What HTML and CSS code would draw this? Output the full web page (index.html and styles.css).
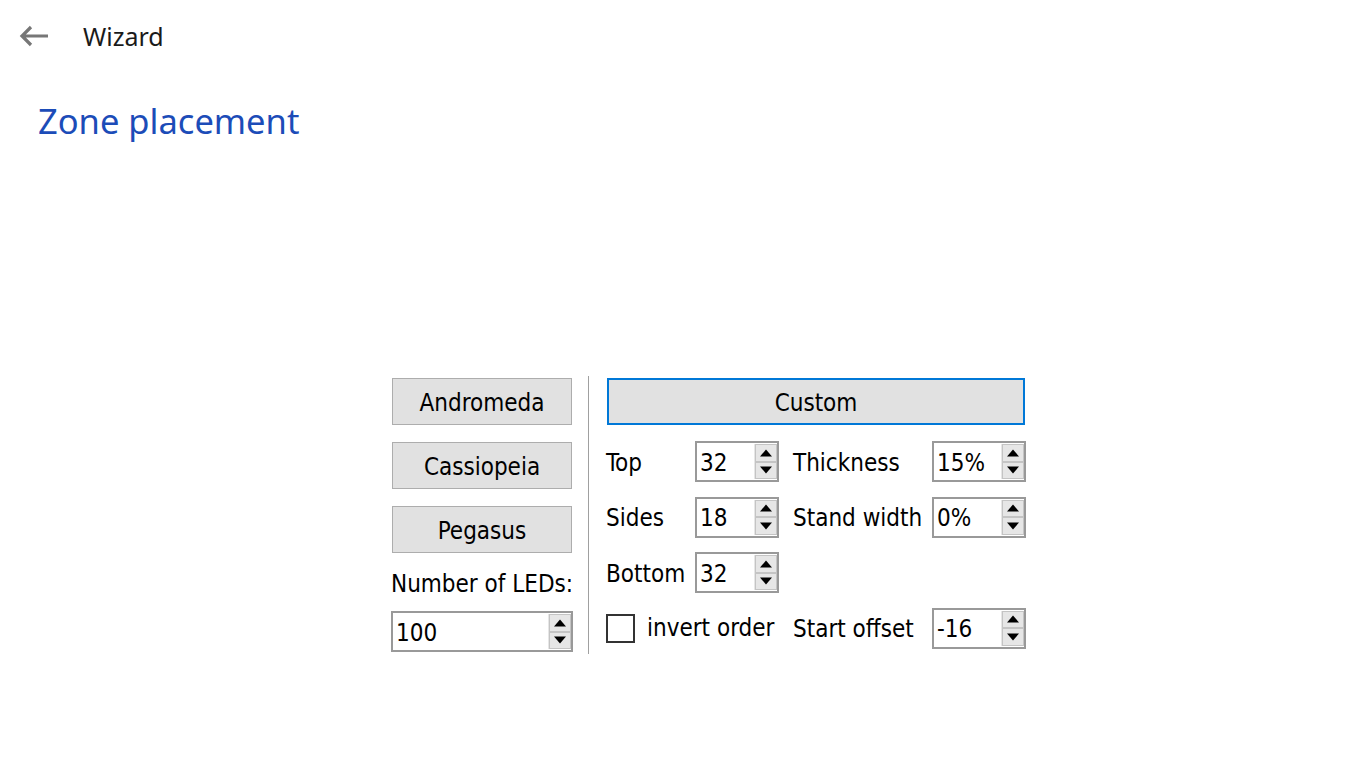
FILE: index.html
```html
<!DOCTYPE html>
<html>
<head>
<meta charset="utf-8">
<link rel="stylesheet" href="styles.css">
</head>
<body>
<header class="topbar">
  <span class="back">
    <svg width="30" height="22" viewBox="0 0 30 22"><path d="M29 11H4M12 2L3 11l9 9" fill="none" stroke="#777" stroke-width="3.2"/></svg>
  </span>
  <span class="app-title">Wizard</span>
</header>
<h1 class="page-title">Zone placement</h1>

<section class="panel">
  <div class="left-col">
    <button class="btn preset">Andromeda</button>
    <button class="btn preset">Cassiopeia</button>
    <button class="btn preset">Pegasus</button>
    <div class="leds-label">Number of LEDs:</div>
    <div class="spin spin-wide">
      <span class="spin-val">100</span>
      <span class="spin-btns"><span class="sb up"></span><span class="sb down"></span></span>
    </div>
  </div>
  <div class="sep"></div>
  <div class="right-col">
    <button class="btn custom">Custom</button>
    <div class="grid">
      <span class="lbl">Top</span>
      <div class="spin spin-s"><span class="spin-val">32</span><span class="spin-btns"><span class="sb up"></span><span class="sb down"></span></span></div>
      <span class="lbl lbl2">Thickness</span>
      <div class="spin spin-m"><span class="spin-val">15%</span><span class="spin-btns"><span class="sb up"></span><span class="sb down"></span></span></div>

      <span class="lbl">Sides</span>
      <div class="spin spin-s"><span class="spin-val">18</span><span class="spin-btns"><span class="sb up"></span><span class="sb down"></span></span></div>
      <span class="lbl lbl2">Stand width</span>
      <div class="spin spin-m"><span class="spin-val">0%</span><span class="spin-btns"><span class="sb up"></span><span class="sb down"></span></span></div>

      <span class="lbl">Bottom</span>
      <div class="spin spin-s"><span class="spin-val">32</span><span class="spin-btns"><span class="sb up"></span><span class="sb down"></span></span></div>
      <span></span>
      <span></span>

      <label class="check"><span class="box"></span><span class="check-text">invert order</span></label>
      <span class="lbl lbl2">Start offset</span>
      <div class="spin spin-m"><span class="spin-val">-16</span><span class="spin-btns"><span class="sb up"></span><span class="sb down"></span></span></div>
    </div>
  </div>
</section>
</body>
</html>
```

FILE: styles.css
```css
* { box-sizing: border-box; }
html, body { margin: 0; padding: 0; background: #fff; }
body {
  width: 1366px;
  height: 768px;
  overflow: hidden;
  font-family: "DejaVu Sans Condensed", "DejaVu Sans", sans-serif;
  color: #000;
}
.topbar {
  display: flex;
  align-items: center;
  height: 72px;
  padding-left: 19px;
}
.back { display: flex; width: 64px; }
.app-title {
  font-family: "Noto Sans", "Open Sans", sans-serif;
  font-size: 25px;
  color: #1a1a1a;
}
.page-title {
  margin: 26px 0 0 38px;
  font-family: "Noto Sans", "Open Sans", sans-serif;
  font-weight: 400;
  font-size: 34.5px;
  line-height: 46px;
  color: #1c4cb8;
}
.panel {
  display: flex;
  margin: 232px 0 0 391px;
  height: 278px;
}
.left-col {
  width: 182px;
  display: flex;
  flex-direction: column;
  align-items: flex-start;
  padding-top: 2px;
}
.btn {
  font-family: "DejaVu Sans Condensed", "DejaVu Sans", sans-serif;
  font-size: 24px;
  color: #000;
  background: #e1e1e1;
  border: 1px solid #adadad;
  padding: 3px 0 0 0;
  height: 47px;
  margin: 0;
}
.preset { width: 180px; margin-left: 1px; margin-bottom: 17px; }
.preset:nth-child(3) { margin-bottom: 16px; }
.leds-label {
  font-size: 24px;
  line-height: 30px;
  margin-bottom: 12px;
  white-space: nowrap;
}
.sep {
  width: 1px;
  background: #a0a0a0;
  margin: 0 17px 0 15px;
  height: 278px;
}
.right-col {
  width: 420px;
  padding-top: 2px;
}
.custom {
  width: 418px;
  margin-left: 1px;
  border: 2px solid #0078d7;
  display: block;
}
.grid {
  display: grid;
  grid-template-columns: 89px 98px 139px 94px;
  grid-auto-rows: 41px;
  row-gap: 14.5px;
  margin-top: 16px;
  align-items: center;
}
.lbl { font-size: 24px; white-space: nowrap; padding-top: 2px; }
.spin {
  height: 41px;
  border: 2px solid #999;
  background: #fff;
  display: flex;
  align-items: center;
  justify-content: space-between;
  padding: 1px 0 1px 3px;
}
.spin-wide { width: 182px; }
.spin-s { width: 84px; }
.spin-m { width: 94px; }
.spin-val { font-size: 24px; padding-top: 2px; }
.spin-btns {
  display: flex;
  flex-direction: column;
  width: 23px;
  height: 100%;
  border-left: 1px solid #e6e6e6;
}
.sb {
  flex: 1;
  background: #e6e6e6;
  border: 1px solid #c4c4c4;
  position: relative;
}
.sb::after {
  content: "";
  position: absolute;
  left: 50%;
  top: 50%;
  transform: translate(-50%, -50%);
  border-left: 6px solid transparent;
  border-right: 6px solid transparent;
}
.sb.up::after { border-bottom: 7px solid #000; }
.sb.down::after { border-top: 7px solid #000; }
.check {
  grid-column: 1 / span 2;
  display: flex;
  align-items: center;
}
.box {
  width: 29px;
  height: 29px;
  border: 2px solid #333;
  background: #fff;
  margin-right: 12px;
}
.check-text { font-size: 24px; white-space: nowrap; }
```
